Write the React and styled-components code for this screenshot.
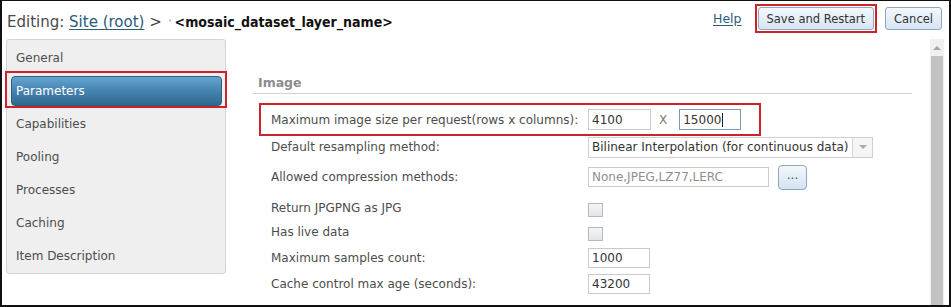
import React from 'react';
import styled, { createGlobalStyle } from 'styled-components';

const Global = createGlobalStyle`
  html, body { margin: 0; padding: 0; background: #fff; }
  body { font-family: "DejaVu Sans", Verdana, sans-serif; }
  *, *::before, *::after { box-sizing: border-box; }
`;

const Frame = styled.div`
  width: 951px;
  height: 307px;
  border-style: solid;
  border-color: #111;
  border-width: 1px 2px 2px 2px;
  background: #fff;
  display: flex;
  flex-direction: column;
  overflow: hidden;
`;

const Header = styled.header`
  height: 38px;
  flex: none;
  display: flex;
  align-items: flex-start;
  justify-content: space-between;
  padding: 3px 7px 0 5px;
`;

const Title = styled.h1`
  margin: 8px 0 0 0;
  font-size: 15px;
  line-height: 20px;
  font-weight: normal;
  color: #4a4a4a;
  white-space: nowrap;
`;

const TitleLink = styled.a`
  color: #2a5c7b;
  text-decoration: underline;
  text-underline-offset: 2px;
`;

const Sep = styled.span`
  color: #444;
`;

const Tick = styled.span`
  color: #999;
  font-size: 11px;
  margin: 0 3px 0 2px;
`;

const LayerName = styled.span`
  font-family: "DejaVu Sans Condensed", "DejaVu Sans", sans-serif;
  font-stretch: condensed;
  font-weight: bold;
  font-size: 14px;
  color: #111;
`;

const Actions = styled.div`
  display: flex;
  align-items: center;
`;

const HelpLink = styled.a`
  font-size: 12.5px;
  color: #2a5c7b;
  text-decoration: underline;
  text-underline-offset: 2px;
  margin-right: 13px;
`;

const Callout = styled.div`
  border: 2px solid #cc2229;
  padding: 1px;
  margin-right: 8px;
  display: flex;
`;

const Button = styled.button`
  height: 23px;
  padding: 0 8px;
  font-family: "DejaVu Sans", Verdana, sans-serif;
  font-size: 11.5px;
  color: #333;
  border: 1px solid #8ea8c3;
  border-radius: 3px;
  background: linear-gradient(#f3f8fc, #d6e5f3);
  cursor: pointer;
`;

const Body = styled.div`
  flex: 1;
  display: flex;
  padding: 0 5px 0 4px;
  min-height: 0;
`;

const Sidebar = styled.nav`
  width: 220px;
  flex: none;
  align-self: flex-start;
  background: #efefef;
  border: 1px solid #d3d3d3;
  border-radius: 3px;
  padding-bottom: 2px;
`;

const NavSlot = styled.div`
  height: 33px;
  padding: 3px 3px 0 4px;
  outline: ${p => (p.$active ? '2px solid #cc2229' : 'none')};
`;

const NavBar = styled.div`
  height: 30px;
  display: flex;
  align-items: center;
  padding-left: ${p => (p.$active ? '4px' : '5px')};
  font-size: 12px;
  color: ${p => (p.$active ? '#fff' : '#4d4d4d')};
  border-radius: 4px;
  border: ${p => (p.$active ? '1px solid #2d5f85' : 'none')};
  background: ${p => (p.$active ? 'linear-gradient(#64a5d0, #4583b0 50%, #2f6890)' : 'transparent')};
`;

const Main = styled.main`
  flex: 1;
  min-width: 0;
  padding: 33px 18px 0 27px;
`;

const SectionTitle = styled.h2`
  margin: 0;
  height: 22px;
  line-height: 21px;
  padding-left: 5px;
  font-size: 12.5px;
  font-weight: bold;
  color: #8c8c8c;
  border-bottom: 1px solid #d2d2d2;
`;

const Highlight = styled.div`
  margin: 9px 0 0 6px;
  width: 502px;
  height: 33px;
  border: 2px solid #cc2229;
  padding-left: 10px;
  display: flex;
  align-items: center;
`;

const Row = styled.div`
  height: ${p => p.$h}px;
  padding-left: 18px;
  display: flex;
  align-items: center;
`;

const Label = styled.span`
  width: 317px;
  flex: none;
  font-size: 12px;
  color: #4d4d4d;
  white-space: nowrap;
`;

const TextBox = styled.div`
  width: ${p => p.$w}px;
  height: ${p => p.$h || 21}px;
  flex: none;
  border: 1px solid ${p => (p.$focus ? '#7d9bb0' : '#cacaca')};
  background: #fff;
  padding: 0 3px;
  display: flex;
  align-items: center;
  font-size: 12px;
  color: ${p => (p.$muted ? '#8f8f8f' : '#333')};
  white-space: nowrap;
`;

const Caret = styled.span`
  display: inline-block;
  width: 1px;
  height: 14px;
  background: #222;
  margin-left: 1px;
`;

const Times = styled.span`
  font-size: 12px;
  color: #7a7a7a;
  margin: 0 12px 0 8px;
`;

const Select = styled.div`
  width: 285px;
  height: 21px;
  flex: none;
  border: 1px solid #cfcfcf;
  display: flex;
  background: #fff;
`;

const SelectText = styled.span`
  flex: 1;
  padding-left: 3px;
  display: flex;
  align-items: center;
  font-size: 12px;
  color: #333;
  white-space: nowrap;
  overflow: hidden;
`;

const SelectArrow = styled.span`
  width: 20px;
  flex: none;
  border-left: 1px solid #d6d6d6;
  background: #f5f5f5;
  display: flex;
  align-items: center;
  justify-content: center;
  &::after {
    content: '';
    border-left: 4px solid transparent;
    border-right: 4px solid transparent;
    border-top: 4px solid #aaa;
  }
`;

const DotsButton = styled.button`
  width: 29px;
  height: 25px;
  margin-left: 9px;
  padding: 0 0 4px 0;
  border: 1px solid #8ea8c3;
  border-radius: 4px;
  background: linear-gradient(#f3f8fc, #d3e2f1);
  font-family: "DejaVu Sans", Verdana, sans-serif;
  font-size: 12px;
  color: #2a5c7b;
  cursor: pointer;
`;

const Checkbox = styled.span`
  width: 15px;
  height: 14px;
  margin-top: 4px;
  border: 1px solid #b8b8b8;
  background: linear-gradient(#f4f5f7, #e3e6ea);
`;

const Scrollbar = styled.div`
  width: 14px;
  flex: none;
  display: flex;
  flex-direction: column;
  background: #f0f0f0;
`;

const ScrollUp = styled.div`
  height: 17px;
  display: flex;
  align-items: center;
  justify-content: center;
  &::after {
    content: '';
    border-left: 4px solid transparent;
    border-right: 4px solid transparent;
    border-bottom: 4px solid #a3a3a3;
  }
`;

const ScrollThumb = styled.div`
  flex: 1;
  margin: 0 1px;
  background: #c2c2c2;
`;

const navItems = ['General', 'Parameters', 'Capabilities', 'Pooling', 'Processes', 'Caching', 'Item Description'];

export default function App() {
  return (
    <>
      <Global />
      <Frame>
        <Header>
          <Title>
            Editing: <TitleLink>Site (root)</TitleLink> <Sep>&gt;</Sep> <Tick>'</Tick>
            <LayerName>&lt;mosaic_dataset_layer_name&gt;</LayerName>
          </Title>
          <Actions>
            <HelpLink>Help</HelpLink>
            <Callout>
              <Button>Save and Restart</Button>
            </Callout>
            <Button>Cancel</Button>
          </Actions>
        </Header>
        <Body>
          <Sidebar>
            {navItems.map(item => (
              <NavSlot key={item} $active={item === 'Parameters'}>
                <NavBar $active={item === 'Parameters'}>{item}</NavBar>
              </NavSlot>
            ))}
          </Sidebar>
          <Main>
            <SectionTitle>Image</SectionTitle>
            <Highlight>
              <Label>Maximum image size per request(rows x columns):</Label>
              <TextBox $w={63}>4100</TextBox>
              <Times>X</Times>
              <TextBox $w={62} $focus>
                15000<Caret />
              </TextBox>
            </Highlight>
            <Row $h={22}>
              <Label>Default resampling method:</Label>
              <Select>
                <SelectText>Bilinear Interpolation (for continuous data)</SelectText>
                <SelectArrow />
              </Select>
            </Row>
            <Row $h={38}>
              <Label>Allowed compression methods:</Label>
              <TextBox $w={181} $h={20} $muted>None,JPEG,LZ77,LERC</TextBox>
              <DotsButton>...</DotsButton>
            </Row>
            <Row $h={24}>
              <Label>Return JPGPNG as JPG</Label>
              <Checkbox />
            </Row>
            <Row $h={24}>
              <Label>Has live data</Label>
              <Checkbox />
            </Row>
            <Row $h={28}>
              <Label>Maximum samples count:</Label>
              <TextBox $w={62} $h={20}>1000</TextBox>
            </Row>
            <Row $h={24}>
              <Label>Cache control max age (seconds):</Label>
              <TextBox $w={62} $h={20}>43200</TextBox>
            </Row>
          </Main>
          <Scrollbar>
            <ScrollUp />
            <ScrollThumb />
          </Scrollbar>
        </Body>
      </Frame>
    </>
  );
}
